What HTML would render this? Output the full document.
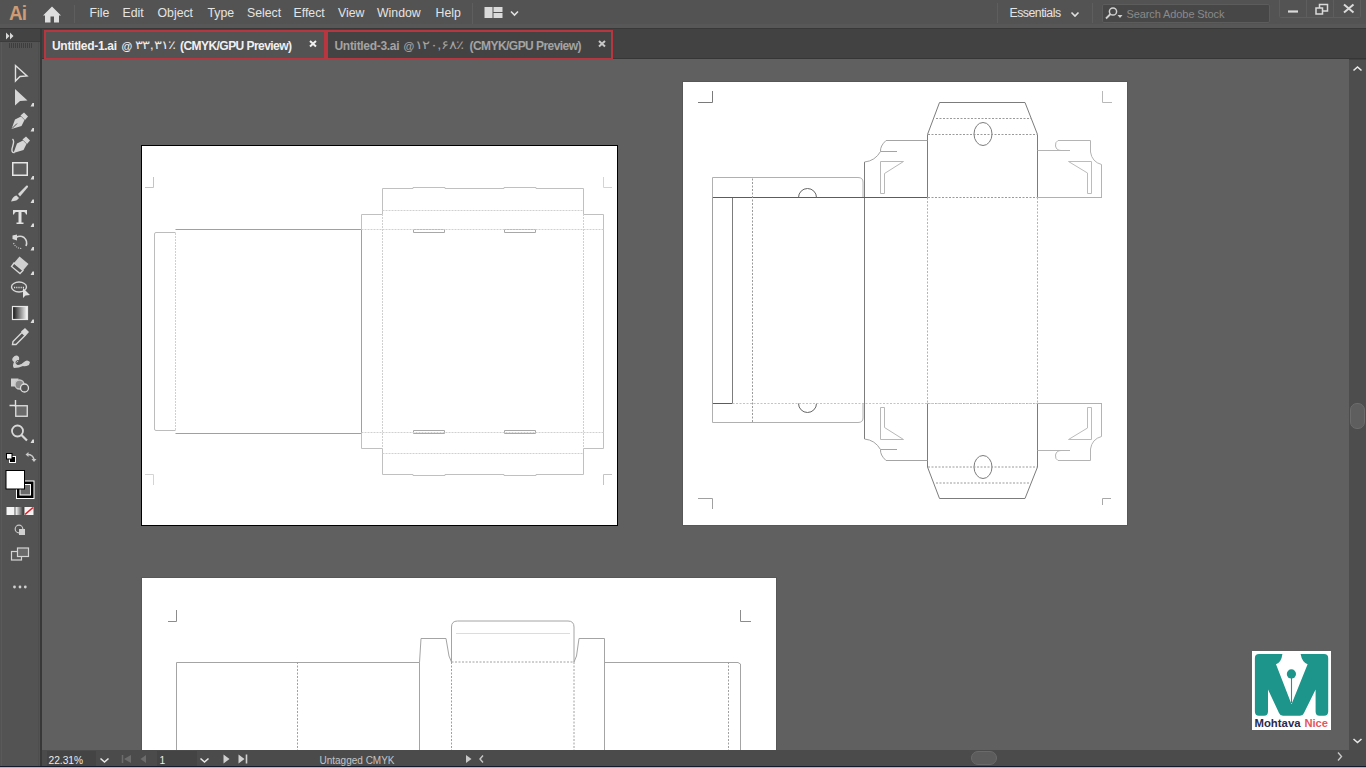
<!DOCTYPE html>
<html><head><meta charset="utf-8">
<style>
*{margin:0;padding:0;box-sizing:border-box}
html,body{width:1366px;height:768px;overflow:hidden;background:#606060;font-family:"Liberation Sans",sans-serif}
.a{position:absolute}
#menubar{left:0;top:0;width:1366px;height:27px;background:#535353}
#tabbar{left:0;top:27px;width:1366px;height:33px;background:#424242}
#toolbar{left:0;top:27px;width:40px;height:739px;background:#535353}
#tooldiv{left:40px;top:27px;width:2px;height:723px;background:#3e3e3e}
#canvas{left:42px;top:59px;width:1307px;height:691px;background:#606060}
#vscroll{left:1349px;top:60px;width:17px;height:690px;background:#4c4c4c}
#status{left:42px;top:750px;width:1324px;height:16px;background:#464646}
#taskbar{left:0;top:765px;width:1366px;height:3px;background:#c9d3e3}
#taskline{left:0;top:765px;width:1366px;height:1px;background:#1b2440}
.menu{top:6px;color:#e4e4e4;font-size:12.3px;white-space:nowrap}
.tab{top:30px;height:29.5px;border:2px solid #b8363f}
.tabt{top:38.5px;font-size:12px;white-space:nowrap}
svg{position:absolute;overflow:visible}
</style></head><body>
<div id="menubar" class="a"></div>
<div id="tabbar" class="a"></div>
<div id="canvas" class="a"></div>
<div id="toolbar" class="a"></div>
<div id="tooldiv" class="a"></div>

<!-- menu -->
<div class="a" style="left:0;top:24px;width:1366px;height:4px;background:#575757"></div>
<div class="a" style="left:0;top:28px;width:1366px;height:1px;background:#383838"></div>
<div class="a" style="left:42px;top:58px;width:1324px;height:1px;background:#363636"></div>
<div class="a" style="left:8.5px;top:0.5px;font-size:21px;font-weight:bold;color:#cf9b74;letter-spacing:-1px;transform:scaleX(0.9);transform-origin:0 0">Ai</div>
<div class="a menu" style="left:89.5px">File</div>
<div class="a menu" style="left:122.5px">Edit</div>
<div class="a menu" style="left:157.5px">Object</div>
<div class="a menu" style="left:207.5px">Type</div>
<div class="a menu" style="left:247px">Select</div>
<div class="a menu" style="left:293.5px">Effect</div>
<div class="a menu" style="left:338px">View</div>
<div class="a menu" style="left:377px">Window</div>
<div class="a menu" style="left:435.5px">Help</div>
<div class="a menu" style="left:1009.5px;letter-spacing:-0.5px">Essentials</div>
<div class="a" style="left:1102px;top:4px;width:168px;height:19px;background:#474747;border:1px solid #5c5c5c;border-radius:2px"></div>
<div class="a" style="left:1126.5px;top:7.5px;font-size:11px;color:#8a8a8a;white-space:nowrap;letter-spacing:-0.1px">Search Adobe Stock</div>
<svg class="a" style="left:0;top:0" width="1366" height="28">
<path d="M43 15.5L52 6.5L61 15.5H59V22.5H54V16.5H50.5V22.5H45V15.5Z" fill="#dedede"/>
<path d="M74.5 5V23M472.5 3V24M997.5 3V23M1092.5 3V23" stroke="#5e5e5e" stroke-width="1"/>
<path d="M484.5 7h8v11h-8zM493.5 7h9v5h-9zM493.5 13h9v5h-9z" fill="#dadada"/>
<path d="M511 11.5l3.5 3.5l3.5-3.5M1071.5 12.5l3.5 3.5l3.5-3.5" stroke="#e0e0e0" stroke-width="1.6" fill="none"/>
<circle cx="1113" cy="11.5" r="3.6" stroke="#d0d0d0" stroke-width="1.5" fill="none"/>
<path d="M1110.5 14l-4.5 4.5" stroke="#d0d0d0" stroke-width="1.8"/>
<path d="M1117.5 15h5l-2.5 3z" fill="#d0d0d0"/>
<path d="M1279.5 -1V16.5Q1279.5 17.5 1280.5 17.5H1359.5Q1360.5 17.5 1360.5 16.5V-1M1306.5 0V17M1333.5 0V17" stroke="#5e5e5e" stroke-width="1" fill="none"/>
<path d="M1288 11.5H1298" stroke="#dadada" stroke-width="2.2"/>
<path d="M1319.5 8V4.5H1327.5V11H1323M1316 8h6.5v6h-6.5z" stroke="#dadada" stroke-width="1.5" fill="none"/>
<path d="M1344 4.5l9.5 8M1353.5 4.5l-9.5 8" stroke="#dadada" stroke-width="2"/>
</svg>
<!-- tabs -->
<div class="a tab" style="left:43.5px;width:282px;background:#535353"></div>
<div class="a tab" style="left:325.5px;width:287.5px;background:#434343"></div>
<div class="a tabt" style="left:52px;color:#f0f0f0;font-weight:bold;letter-spacing:-0.3px">Untitled-1.ai</div>
<div class="a tabt" style="left:121.5px;top:39.5px;font-size:11px;color:#f0f0f0;font-weight:bold">@</div>
<div class="a tabt" style="left:135px;color:#e8e8e8;transform:scaleX(1.22) translateY(-1px);transform-origin:0 0">۳۳,۳۱٪</div>
<div class="a tabt" style="left:180px;color:#f0f0f0;font-weight:bold;letter-spacing:-0.55px">(CMYK/GPU Preview)</div>
<div class="a tabt" style="left:334.5px;color:#a4a4a4;font-weight:bold;letter-spacing:-0.3px">Untitled-3.ai</div>
<div class="a tabt" style="left:403.5px;top:39.5px;font-size:11px;color:#a4a4a4;font-weight:bold">@</div>
<div class="a tabt" style="left:414.5px;color:#a4a4a4;transform:scaleX(1.24) translateY(-1px);transform-origin:0 0">۱۲۰,۶۸٪</div>
<div class="a tabt" style="left:469.5px;color:#a4a4a4;font-weight:bold;letter-spacing:-0.55px">(CMYK/GPU Preview)</div>
<svg class="a" style="left:0;top:0" width="700" height="60">
<path d="M310 41l6 5.5M316 41l-6 5.5" stroke="#f0f0f0" stroke-width="2"/>
<path d="M599 41l6 5.5M605 41l-6 5.5" stroke="#c8c8c8" stroke-width="2"/>
</svg>
<!-- artboards -->
<div class="a" style="left:141px;top:145px;width:477px;height:381px;background:#fff;border:1px solid #000"></div>
<div class="a" style="left:683px;top:82px;width:444px;height:443px;background:#fff;box-shadow:0 0 0 1px #575757"></div>
<div class="a" style="left:142px;top:578px;width:634px;height:172px;background:#fff;box-shadow:0 0 0 1px #575757"></div>
<svg class="a" style="left:0;top:0" width="1366" height="750" viewBox="0 0 1366 750">
<g fill="none" stroke-width="1">
<!-- AB1 crop marks -->
<g stroke="#c4c4c4">
<path d="M153.5 177V187.5H145"/><path d="M603.5 485V474.5H612"/>
<path d="M153.5 485V474.5H145" stroke="#d4d4d4"/><path d="M603.5 177V187.5H612" stroke="#d4d4d4"/>
</g>
<!-- AB1 box -->
<g stroke="#b4b4b4">
<path d="M175.5 229.5H361.5V433.5H175.5" stroke="#a0a0a0"/>
<path d="M175.5 232.5H156Q154.5 232.5 154.5 234V429Q154.5 430.5 156 430.5H175.5" stroke="#bcbcbc"/>
<path d="M361.5 229.5V214.5H382.5V188.5H413V187.5H445V188.5H504V187.5H536V188.5H583.5V214.5H603.5V448.5H583.5V474.5H536V475.5H504V474.5H445V475.5H413V474.5H382.5V448.5H361.5V433.5" stroke="#c0c0c0"/>
<path d="M413.5 229.5h31v3h-31zM504.5 229.5h31v3h-31zM413.5 430.5h31v3h-31zM504.5 430.5h31v3h-31z" stroke="#a8a8a8"/>
</g>
<g stroke="#d0d0d0" stroke-dasharray="2 1">
<path d="M175.5 233V430"/>
<path d="M382.5 210.5H583.5M361.5 229.5H603.5M361.5 432.5H603.5M382.5 453.5H583.5"/>
<path d="M382.5 214V448M583.5 214V448"/>
</g>
<!-- AB2 crop marks -->
<g stroke="#7a7a7a">
<path d="M712.5 91V102.5H698"/><path d="M712.5 509V498.5H698" stroke="#a0a0a0"/>
<path d="M1102.5 91V102.5H1112" stroke="#b8b8b8"/><path d="M1102.5 505V498.5H1111" stroke="#a8a8a8"/>
</g>
<!-- AB2 box -->
<g stroke="#7c7c7c">
<path d="M712.5 197.5V403.5" stroke="#a0a0a0"/><path d="M732.5 197.5V403.5M864.5 162V439M927.5 134.5V197.5M1037.5 134.5V197.5M927.5 403.5V467M1037.5 403.5V467"/>
<path d="M712.5 197.5H927.5M712.5 403.5H732.5" stroke="#5c5c5c"/>
<path d="M927.5 134.5L939.5 102.5H1025L1037.5 134.5"/>
<path d="M927.5 467L939.5 498.5H1025L1037.5 467"/>
<ellipse cx="983" cy="134" rx="9" ry="11.5"/><ellipse cx="983" cy="467" rx="9" ry="11.5"/>
<path d="M798.5 197.5A9 9 0 0 1 816.5 197.5M798.5 403.5A9 9 0 0 0 816.5 403.5" stroke="#666"/>
</g>
<g stroke="#a4a4a4">
<path d="M712.5 197.5V177.5H858Q863 177.5 863 182V197" stroke="#b0b0b0"/>
<path d="M712.5 403.5V422.5H858Q863 422.5 863 418V404" stroke="#b0b0b0"/>
<path d="M864.5 162Q875 161 880.5 151.5H897M880.5 151.5Q880 146 886 140.5H927.5"/>
<path d="M880.5 161.5V193.5H884.5V173.5L903.5 161.5Z" stroke="#b8b8b8"/>
<path d="M864.5 439Q875 440 880.5 449.5H897M880.5 449.5Q880 455 886 460.5H927.5"/>
<path d="M880.5 439.5V407.5H884.5V427.5L903.5 439.5Z" stroke="#b8b8b8"/>
<path d="M1058 140.5H1090.5V152Q1092 162 1101.5 164.5V197.5M1037.5 150.5H1070M1058 140.5Q1055 142 1055.5 146Q1056.5 150.5 1061 150.5" stroke="#b4b4b4"/>
<path d="M1068.5 161.5H1091.5V193.5H1087.5V173Z" stroke="#bcbcbc"/>
<path d="M1058 460.5H1090.5V449Q1092 439 1101.5 436.5V403.5M1037.5 450.5H1070M1058 460.5Q1055 459 1055.5 455Q1056.5 450.5 1061 450.5" stroke="#b4b4b4"/>
<path d="M1068.5 439.5H1091.5V407.5H1087.5V428Z" stroke="#bcbcbc"/>
<path d="M1037.5 403.5H1102M1037.5 197.5H1102" stroke="#b0b0b0"/>
</g>
<g stroke="#9a9a9a" stroke-dasharray="2 1.5">
<path d="M752.5 178.5V422.5"/>
<path d="M936 118.5H1031M928 134.5H1037M928 197.5H1037M928 403.5H1037M928 467H1037M936 483H1030"/>
<path d="M927.5 197.5V403.5M1037.5 197.5V403.5" stroke="#b4b4b4"/>
<path d="M732.5 403.5H1037" stroke="#c4c4c4"/>
</g>
<!-- AB3 crop -->
<g stroke="#8c8c8c">
<path d="M176.5 610V621.5H168"/><path d="M740.5 610V621.5H751"/>
</g>
<g stroke="#a4a4a4">
<path d="M176.5 750V662.5H419.5"/>
<path d="M419.5 750V662.5L421 638.5H446L449 656L451.5 662V627Q451.5 621 457.5 621H568Q574 621 574 627V662L576.5 656L579 638.5H604.5V750"/>
<path d="M604.5 662.5H738L740.5 664V750"/>
<path d="M456 633.5H570" stroke="#dcdcdc"/>
</g>
<g stroke="#a0a0a0" stroke-dasharray="2 1.5">
<path d="M297.5 662V750M451.5 662V750M574 662V750M728.5 662V750M451.5 662H574"/>
</g>
</g>
</svg>
<!-- status -->
<div class="a" style="left:42px;top:750px;width:1324px;height:16px;background:#4b4b4b"></div>
<div class="a" style="left:488px;top:750px;width:850px;height:16px;background:#4b4b4b"></div>
<div class="a" style="left:47px;top:751px;width:49px;height:15px;background:#444444"></div>
<div class="a" style="left:157px;top:751px;width:40px;height:15px;background:#444444"></div>
<div class="a" style="left:48.5px;top:755px;font-size:10.2px;color:#ececec;white-space:nowrap">22.31%</div>
<div class="a" style="left:159.5px;top:755px;font-size:10.2px;color:#ececec">1</div>
<div class="a" style="left:319.5px;top:755px;font-size:10px;color:#c4c4c4;white-space:nowrap">Untagged CMYK</div>
<div class="a" style="left:970.5px;top:751px;width:26px;height:14px;background:#5c5c5c;border:1px solid #6a6a6a;border-radius:7px"></div>
<div class="a" style="left:1349px;top:60px;width:17px;height:690px;background:#4d4d4d"></div>
<div class="a" style="left:1350px;top:403px;width:15px;height:26px;background:#5e5e5e;border:1px solid #6c6c6c;border-radius:7px"></div>
<svg class="a" style="left:0;top:0" width="1366" height="768">
<path d="M100.5 758.5l4 3.5l4-3.5M200.5 758.5l4 3.5l4-3.5M1353.5 739l4 3.5l4-3.5M1353.5 70.5l4-3.5l4 3.5" stroke="#e8e8e8" stroke-width="1.6" fill="none"/>
<path d="M122.5 755v8M131 755v8l-7-4zM146 755v8l-5.5-4z" stroke="none" fill="#6c6c6c"/>
<path d="M122.5 755v8" stroke="#6c6c6c" stroke-width="1.5"/>
<path d="M223.5 754.5v9l6-4.5zM238.5 754.5v9l6-4.5z" fill="#d0d0d0"/>
<path d="M246.5 754.5v9" stroke="#d0d0d0" stroke-width="1.6"/>
<path d="M466 755v8l5.5-4z" fill="#c8c8c8"/>
<path d="M483 755.5l-3 3.5l3 3.5M1338 752.5l3.5 4l-3.5 4" stroke="#c8c8c8" stroke-width="1.4" fill="none"/>
</svg>
<div class="a" style="left:0;top:766px;width:1366px;height:1px;background:#121a2e"></div>
<div class="a" style="left:0;top:767px;width:1366px;height:1px;background:#a9b6d2"></div>
<!-- logo -->
<div class="a" style="left:1252px;top:651px;width:79px;height:79px;background:#fff"></div>
<svg class="a" style="left:1252px;top:651px" width="79" height="79" viewBox="0 0 79 79">
<path d="M2.9 7Q2.9 2.9 7 2.9H30.4Q29.5 11 24 13.2L39.5 53.3L55.6 13.2Q50 11 48.6 2.9H72Q76.2 2.9 76.2 7V60.5Q76.2 64.7 72 64.7H67.5Q63.6 64.7 63.6 60.5V38.4L52 62Q51 64.7 48 64.7H31Q28 64.7 27 62L16 38.4V60.5Q16 64.7 12 64.7H7Q2.9 64.7 2.9 60.5Z" fill="#1d958a"/>
<circle cx="39.4" cy="22.9" r="4.6" fill="#1d958a"/>
<path d="M39.5 24V52" stroke="#1d958a" stroke-width="1.1"/>
<text x="2.5" y="75.8" font-family="Liberation Sans" font-weight="bold" font-size="10" fill="#2a2b50" textLength="46" lengthAdjust="spacingAndGlyphs">Mohtava</text>
<text x="52.5" y="75.8" font-family="Liberation Sans" font-weight="bold" font-size="10" fill="#e4585e" textLength="23.5" lengthAdjust="spacingAndGlyphs">Nice</text>
</svg>
<!-- toolbar -->
<div class="a" style="left:0;top:29px;width:40px;height:12px;background:#434343"></div>
<div class="a" style="left:0;top:41px;width:40px;height:1px;background:#3c3c3c"></div>
<div class="a" style="left:40px;top:29px;width:2px;height:737px;background:#383838"></div>
<div class="a" style="left:1px;top:42px;width:1px;height:724px;background:#5a5a5a"></div>
<div class="a" style="left:38px;top:42px;width:1px;height:724px;background:#4e4e4e"></div>
<svg class="a" style="left:0;top:0" width="42" height="750">
<path d="M6 32.5l3.5 3.5l-3.5 3.5zM10 32.5l3.5 3.5l-3.5 3.5z" fill="#d8d8d8"/>
<path d="M9.5 43v5M11.5 43v5M13.5 43v5M15.5 43v5M17.5 43v5M19.5 43v5M21.5 43v5M23.5 43v5M25.5 43v5M27.5 43v5M29.5 43v5M31.5 43v5" stroke="#3e3e3e" stroke-width="1"/>
<g fill="#dcdcdc">
<path d="M32.5 103l1.5 0l0 3.5l-3.5 0z M32.5 128l1.5 0l0 3.5l-3.5 0z M32.5 176l1.5 0l0 3.5l-3.5 0z M32.5 199.5l1.5 0l0 3.5l-3.5 0z M32.5 223.5l1.5 0l0 3.5l-3.5 0z M32.5 247l1.5 0l0 3.5l-3.5 0z M32.5 271.5l1.5 0l0 3.5l-3.5 0z M32.5 319.5l1.5 0l0 3.5l-3.5 0z M32.5 439.5l1.5 0l0 3.5l-3.5 0z"/>
</g>
<!-- selection -->
<path d="M15.5 65.5V81L20 76.5L27 76Z" stroke="#e0e0e0" stroke-width="1.4" fill="none" stroke-linejoin="miter"/>
<!-- direct selection -->
<path d="M15 89V105.5L20 101L27.5 100.5Z" fill="#d6d6d6"/>
<!-- pen -->
<path d="M11.5 129L15 119.5L21 116.5L24.5 120L21.5 126Z" fill="#d6d6d6"/>
<path d="M20.5 115.5L24 112.5L28 116.5L25 120Z" fill="#d6d6d6"/>
<path d="M12 128.5L17 123.5" stroke="#535353" stroke-width="1"/>
<!-- curvature pen -->
<path d="M13.5 153L17 143.5L23 140.5L26.5 144L23.5 150Z" fill="#d6d6d6"/>
<path d="M22.5 139.5L26 136.5L30 140.5L27 144Z" fill="#d6d6d6"/>
<path d="M12.5 139C16 142 11 147 12 151Q12.5 153 14.5 152.5" stroke="#d6d6d6" stroke-width="1.4" fill="none"/>
<!-- rect -->
<rect x="12.75" y="162.75" width="14.5" height="12.5" stroke="#e6e6e6" stroke-width="1.5" fill="#5e5e5e"/>
<!-- brush -->
<path d="M11 201.5Q13 196 16.5 195.5L19 198Q17.5 201 11 201.5Z" fill="#d6d6d6"/>
<path d="M18 194L26.5 185.5Q28.5 185 28 187L20 196.5Z" fill="#d6d6d6"/>
<!-- type -->
<path d="M13 210H27V214.5H26Q25.5 212 24 212H21.5V222.5H23.5V224H16.5V222.5H18.5V212H16Q14.5 212 14 214.5H13Z" fill="#e0e0e0"/>
<!-- rotate -->
<path d="M16 237.5Q20 235 24 237.5Q28 241 26 246" stroke="#d8d8d8" stroke-width="1.6" fill="none"/>
<path d="M12.5 235.5L17 234.5V240.5L12.5 239Z" fill="#d8d8d8"/>
<path d="M13.5 243Q16 248.5 22 248.5" stroke="#c0c0c0" stroke-width="1.2" stroke-dasharray="1.2 1" fill="none"/>
<!-- eraser -->
<path d="M19.5 256.5L28.5 264L23 270.5L14 263Z" fill="#d0d0d0"/>
<path d="M14 263L23 270.5L20 273.5L11.5 266.5Z" fill="#535353" stroke="#d8d8d8" stroke-width="1.3"/>
<!-- shape builder -->
<ellipse cx="19" cy="287" rx="7.5" ry="5" stroke="#d8d8d8" stroke-width="1.4" fill="none"/>
<path d="M14 287.5h10" stroke="#d8d8d8" stroke-width="1.4" stroke-dasharray="1.2 1"/>
<path d="M23 288V298L25.5 295.5L30 295Z" fill="#e0e0e0"/>
<!-- gradient -->
<defs><linearGradient id="gr" x1="0" x2="1" y1="0" y2="0"><stop offset="0" stop-color="#111"/><stop offset="1" stop-color="#fff"/></linearGradient></defs>
<rect x="12.5" y="306.5" width="15" height="13" stroke="#e6e6e6" stroke-width="1.2" fill="url(#gr)"/>
<!-- eyedropper -->
<path d="M12.5 344.5L13 341.5L22 332.5L25 335.5L16 344.5Z" stroke="#d8d8d8" stroke-width="1.4" fill="none"/>
<path d="M21 331.5L25 328L29 332L25.5 336Z" fill="#d8d8d8"/>
<!-- puppet warp / width -->
<path d="M13 357.5Q16 354 19 357Q20 361 16 363Q19 367 24 362Q27 359 30 362L29 365Q25 367 23 366Q19 368 14 368Q12 366 14 362Q11 360 13 357.5Z" fill="#cfcfcf"/>
<circle cx="18" cy="362.5" r="2" stroke="#535353" stroke-width="1" fill="none"/>
<!-- live paint -->
<rect x="11" y="378.5" width="7.5" height="8" fill="#d0d0d0"/>
<circle cx="19.5" cy="384.5" r="4.5" fill="#8a8a8a" stroke="#c8c8c8" stroke-width="1.3"/>
<circle cx="24.5" cy="388" r="4" fill="#535353" stroke="#dedede" stroke-width="1.3"/>
<!-- artboard -->
<path d="M15.5 400V407M9.5 405.5H16" stroke="#e0e0e0" stroke-width="1.4"/>
<rect x="15.75" y="405.75" width="11.5" height="10.5" stroke="#e0e0e0" stroke-width="1.3" fill="#6b6b6b"/>
<!-- zoom -->
<circle cx="17.5" cy="431" r="5.5" stroke="#d8d8d8" stroke-width="1.8" fill="none"/>
<path d="M21.5 435L27 440.5" stroke="#d8d8d8" stroke-width="2.2"/>
<!-- default fill/stroke -->
<rect x="9.5" y="456.5" width="6" height="6" fill="#000" stroke="#fff" stroke-width="1"/>
<rect x="6.5" y="453.5" width="5.5" height="5.5" fill="#fff" stroke="#000" stroke-width="1"/>
<!-- swap -->
<path d="M27.5 454.5Q33 454.5 34 459.5" stroke="#c8c8c8" stroke-width="1.5" fill="none"/>
<path d="M25.5 454.5l3-2.5v5z M34 462l-2.5-3h5z" fill="#c8c8c8"/>
<!-- stroke box -->
<rect x="16.5" y="481" width="17.5" height="17.5" fill="#000" stroke="#fff" stroke-width="1"/>
<rect x="20" y="484.5" width="10.5" height="10.5" fill="#6a6a6a" stroke="#fff" stroke-width="1"/>
<!-- fill box -->
<rect x="6" y="470.5" width="18.5" height="18.5" fill="#fff" stroke="#000" stroke-width="1"/>
<!-- color modes -->
<rect x="6.5" y="507" width="8" height="8" fill="#f4f4f4"/>
<defs><linearGradient id="gr2" x1="0" x2="1"><stop offset="0" stop-color="#fff"/><stop offset="1" stop-color="#333"/></linearGradient></defs>
<rect x="15.5" y="507" width="8" height="8" fill="url(#gr2)"/>
<rect x="24.5" y="507" width="9" height="8" fill="#f4f4f4"/>
<path d="M25 514.5L33 507.5" stroke="#e0202a" stroke-width="1.6"/>
<!-- draw mode -->
<circle cx="19" cy="529" r="3.8" stroke="#c8c8c8" stroke-width="1.2" fill="none"/>
<rect x="19" y="529" width="6" height="6" fill="#d0d0d0"/>
<!-- screen mode -->
<rect x="11.5" y="551.5" width="10" height="8.5" stroke="#d4d4d4" stroke-width="1.2" fill="#5a5a5a"/>
<rect x="17.5" y="548" width="11" height="8.5" stroke="#d4d4d4" stroke-width="1.2" fill="#6a6a6a"/>
<!-- dots -->
<circle cx="14.5" cy="587" r="1.4" fill="#d0d0d0"/><circle cx="20" cy="587" r="1.4" fill="#d0d0d0"/><circle cx="25.3" cy="587" r="1.4" fill="#d0d0d0"/>
</svg>
</body></html>
